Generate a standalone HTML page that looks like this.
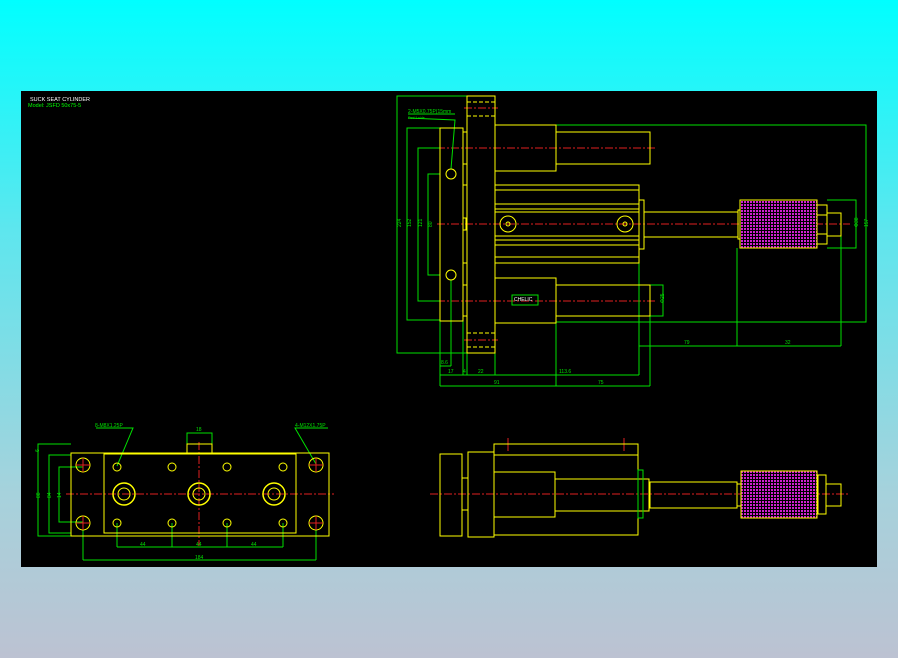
<!DOCTYPE html>
<html><head><style>
html,body{margin:0;padding:0}
body{width:898px;height:658px;background:linear-gradient(to bottom,#00ffff 0%,#5ee6ee 35%,#a6d2dc 75%,#bcc2d2 100%);position:relative;overflow:hidden;font-family:"Liberation Sans",sans-serif}
svg{position:absolute;left:0;top:0}
</style></head><body>
<svg width="898" height="658" viewBox="0 0 898 658">
<defs>
<pattern id="kn" width="3" height="3" patternUnits="userSpaceOnUse">
<rect width="3" height="3" fill="#000"/>
<rect width="2" height="2" fill="#d020d0"/>
</pattern>
</defs>
<rect x="21" y="91" width="856" height="476" fill="#000"/>
<text x="30" y="101" fill="#fff" font-size="5.5">SUCK SEAT CYLINDER</text>
<text x="28" y="107" fill="#00ff00" font-size="5.5">Model: JSFD 50x75-5</text>

<!-- ===== TOP VIEW ===== -->
<g fill="none" stroke-width="1">
<!-- red centerlines -->
<g stroke="#e02020" stroke-dasharray="8,2,2,2">
<line x1="437" y1="148" x2="655" y2="148"/>
<line x1="437" y1="224" x2="850" y2="224"/>
<line x1="437" y1="301" x2="655" y2="301"/>
<line x1="464" y1="108" x2="498" y2="108"/>
<line x1="464" y1="340" x2="498" y2="340"/>
</g>
<!-- green dims -->
<g stroke="#00e000">
<polyline points="467,96 397,96 397,353 467,353"/>
<polyline points="440,128 407,128 407,320 440,320"/>
<polyline points="440,148 418,148 418,301 440,301"/>
<polyline points="440,174 428,174 428,275 440,275"/>
<line x1="440" y1="321" x2="440" y2="386"/>
<line x1="451" y1="280" x2="451" y2="366"/>
<line x1="463" y1="321" x2="463" y2="375"/>
<line x1="467" y1="353" x2="467" y2="375"/>
<line x1="495" y1="330" x2="495" y2="375"/>
<line x1="556" y1="323" x2="556" y2="386"/>
<line x1="639" y1="263" x2="639" y2="375"/>
<line x1="650" y1="316" x2="650" y2="386"/>
<line x1="737" y1="248" x2="737" y2="346"/>
<line x1="841" y1="236" x2="841" y2="346"/>
<line x1="440" y1="375" x2="639" y2="375"/>
<line x1="440" y1="386" x2="650" y2="386"/>
<line x1="639" y1="346" x2="841" y2="346"/>
<polyline points="556,125 866,125 866,322 556,322"/>
<polyline points="827,200 856,200 856,248 827,248"/>
<polyline points="650,285 663,285 663,316 650,316"/>
<polyline points="451,169 455,120 408,118"/>
<line x1="408" y1="114" x2="455" y2="114"/>
<line x1="440" y1="366" x2="451" y2="366"/>
</g>
<!-- yellow parts -->
<g stroke="#ffff00">
<rect x="467" y="96" width="28" height="257"/>
<line x1="467" y1="102" x2="495" y2="102" stroke-dasharray="4,2"/>
<line x1="467" y1="116" x2="495" y2="116" stroke-dasharray="4,2"/>
<line x1="467" y1="333" x2="495" y2="333" stroke-dasharray="4,2"/>
<line x1="467" y1="347" x2="495" y2="347" stroke-dasharray="4,2"/>
<rect x="440" y="128" width="23" height="193"/>
<line x1="463" y1="132" x2="467" y2="132"/><line x1="463" y1="164" x2="467" y2="164"/>
<line x1="463" y1="185" x2="467" y2="185"/><line x1="463" y1="263" x2="467" y2="263"/>
<line x1="463" y1="285" x2="467" y2="285"/><line x1="463" y1="316" x2="467" y2="316"/>
<rect x="463" y="218" width="3" height="12"/>
<rect x="495" y="125" width="61" height="46"/>
<rect x="556" y="132" width="94" height="32"/>
<rect x="495" y="278" width="61" height="45"/>
<rect x="556" y="285" width="94" height="31"/>
<rect x="495" y="185" width="144" height="78"/>
<line x1="495" y1="190" x2="639" y2="190"/>
<line x1="495" y1="204" x2="639" y2="204"/>
<line x1="495" y1="209" x2="639" y2="209"/>
<line x1="495" y1="212" x2="639" y2="212"/>
<line x1="495" y1="236" x2="639" y2="236"/>
<line x1="495" y1="240" x2="639" y2="240"/>
<line x1="495" y1="245" x2="639" y2="245"/>
<line x1="495" y1="257" x2="639" y2="257"/>
<rect x="639" y="200" width="5" height="49"/>
<rect x="644" y="212" width="94" height="25"/>
<rect x="738" y="210" width="3" height="29"/>
<rect x="817" y="205" width="10" height="39"/>
<line x1="817" y1="215" x2="827" y2="215"/><line x1="817" y1="234" x2="827" y2="234"/>
<rect x="827" y="213" width="14" height="23"/>
<circle cx="451" cy="174" r="5"/><circle cx="451" cy="275" r="5"/>
<circle cx="508" cy="224" r="8"/><circle cx="508" cy="224" r="2"/>
<circle cx="625" cy="224" r="8"/><circle cx="625" cy="224" r="2"/>
</g>
<rect x="740" y="200" width="77" height="48" fill="url(#kn)" stroke="#ffff00"/>
<rect x="512" y="295" width="26" height="10" stroke="#00e000"/>
</g>
<g fill="#00e000" font-size="5">
<text x="408" y="113">2-M5X0.75P(15mm</text>
<text x="408" y="119" font-size="3.5">Rod 1 side</text>
<text x="514" y="301" fill="#fff" font-size="5">CHELIC</text>
<text x="448" y="373">17</text><text x="463" y="373">4</text><text x="478" y="373">22</text>
<text x="559" y="373">113.6</text><text x="494" y="384">91</text><text x="598" y="384">75</text>
<text x="684" y="344">79</text><text x="785" y="344">32</text>
<text x="441" y="364">8.6</text>
<text x="394" y="228" transform="rotate(-90 397 224)">224</text>
<text x="404" y="228" transform="rotate(-90 407 224)">152</text>
<text x="415" y="228" transform="rotate(-90 418 224)">121</text>
<text x="425" y="228" transform="rotate(-90 428 224)">80</text>
<text x="861" y="228" transform="rotate(-90 864 224)">157</text>
<text x="851" y="228" transform="rotate(-90 854 224)">Φ38</text>
<text x="658" y="303" transform="rotate(-90 661 300)">Φ25</text>
</g>

<!-- ===== FRONT VIEW (bottom-left) ===== -->
<g fill="none">
<g stroke="#e02020" stroke-dasharray="8,2,2,2">
<line x1="66" y1="494" x2="334" y2="494"/>
<line x1="199" y1="442" x2="199" y2="546"/>
</g>
<g stroke="#00e000">
<polyline points="71,444 38,444 38,536 71,536"/>
<polyline points="71,455 49,455 49,533 71,533"/>
<polyline points="83,467 59,467 59,522 83,522"/>
<line x1="117" y1="523" x2="117" y2="547"/><line x1="172" y1="523" x2="172" y2="547"/>
<line x1="227" y1="523" x2="227" y2="547"/><line x1="283" y1="523" x2="283" y2="547"/>
<line x1="117" y1="547" x2="283" y2="547"/>
<line x1="83" y1="523" x2="83" y2="560"/><line x1="316" y1="523" x2="316" y2="560"/>
<line x1="83" y1="560" x2="316" y2="560"/>
<polyline points="187,444 187,433 212,433 212,444"/>
<polyline points="117,466 133,428 96,428"/>
<polyline points="316,464 295,428 328,428"/>
</g>
<g stroke="#ffff00">
<rect x="71" y="453" width="258" height="83"/>
<rect x="104" y="454" width="192" height="79"/>
<rect x="187" y="444" width="25" height="9"/>
<circle cx="83" cy="465" r="7"/><circle cx="83" cy="523" r="7"/>
<circle cx="316" cy="465" r="7"/><circle cx="316" cy="523" r="7"/>
<g stroke-width="1.5">
<circle cx="124" cy="494" r="11"/><circle cx="199" cy="494" r="11"/><circle cx="274" cy="494" r="11"/>
</g>
<circle cx="124" cy="494" r="6"/><circle cx="199" cy="494" r="6"/><circle cx="274" cy="494" r="6"/>
<circle cx="117" cy="467" r="4"/><circle cx="172" cy="467" r="4"/><circle cx="227" cy="467" r="4"/><circle cx="283" cy="467" r="4"/>
<circle cx="117" cy="523" r="4"/><circle cx="172" cy="523" r="4"/><circle cx="227" cy="523" r="4"/><circle cx="283" cy="523" r="4"/>
</g>
<g stroke="#e02020">
<line x1="76" y1="465" x2="90" y2="465"/><line x1="83" y1="458" x2="83" y2="472"/>
<line x1="76" y1="523" x2="90" y2="523"/><line x1="83" y1="516" x2="83" y2="530"/>
<line x1="309" y1="465" x2="323" y2="465"/><line x1="316" y1="458" x2="316" y2="472"/>
<line x1="309" y1="523" x2="323" y2="523"/><line x1="316" y1="516" x2="316" y2="530"/>
</g>
</g>
<g fill="#00e000" font-size="5">
<text x="95" y="427">8-M8X1.25P</text>
<text x="295" y="427">4-M12X1.75P</text>
<text x="196" y="431">18</text>
<text x="140" y="546">44</text><text x="196" y="546">44</text><text x="251" y="546">44</text>
<text x="195" y="559">184</text>
<text x="35" y="452" transform="rotate(-90 37 450)">6</text>
<text x="33" y="497" transform="rotate(-90 37 494)">88</text>
<text x="44" y="497" transform="rotate(-90 48 494)">84</text>
<text x="54" y="497" transform="rotate(-90 58 494)">14</text>
</g>

<!-- ===== SIDE VIEW ===== -->
<g fill="none">
<line x1="430" y1="494" x2="848" y2="494" stroke="#e02020" stroke-dasharray="8,2,2,2"/>
<g stroke="#e02020"><line x1="508" y1="438" x2="508" y2="451"/><line x1="624" y1="438" x2="624" y2="451"/></g>
<g stroke="#ffff00">
<rect x="440" y="454" width="22" height="82"/>
<line x1="462" y1="478" x2="468" y2="478"/><line x1="462" y1="510" x2="468" y2="510"/>
<rect x="468" y="452" width="26" height="85"/>
<rect x="494" y="444" width="144" height="91"/>
<line x1="494" y1="455" x2="638" y2="455"/>
<rect x="494" y="472" width="61" height="45"/>
<rect x="555" y="479" width="94" height="32"/>
<rect x="650" y="482" width="87" height="26"/>
<rect x="737" y="484" width="4" height="22"/>
<rect x="818" y="475" width="8" height="39"/>
<rect x="826" y="484" width="15" height="22"/>
</g>
<rect x="638" y="470" width="5" height="48" stroke="#00e000"/>
<rect x="741" y="471" width="76" height="47" fill="url(#kn)" stroke="#ffff00"/>
</g>
</svg>
</body></html>
